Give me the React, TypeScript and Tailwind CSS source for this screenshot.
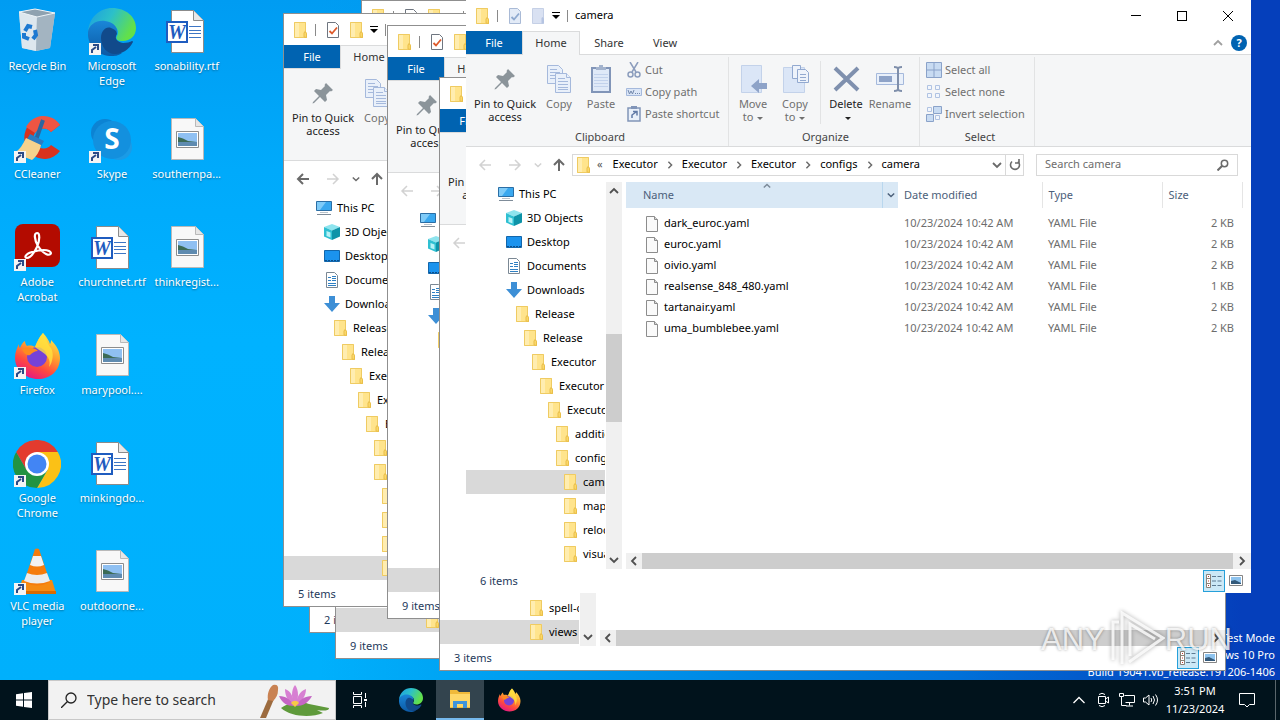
import type { ReactNode } from 'react';
import { clsx } from 'clsx';

/* ---------- small icons ---------- */

function FolderIcon() {
  return (
    <svg className="h-4 w-4 shrink-0" viewBox="0 0 16 16">
      <path d="M2 0h12v10l.5 1v5H2z" fill="#ffe48c" />
      <path d="M2.500.5h11v9.500l1 1.500v4h-12z" fill="none" stroke="#efcb62" />
      <path d="M3 1h4v14H3z" fill="#ffedb0" />
      <path d="M12 15v-4l1-1.500 1.500 2v4z" fill="#fbd768" stroke="#e9bf4a" />
    </svg>
  );
}

function CheckDocIcon({ muted }: { muted?: boolean }) {
  return (
    <svg className="h-4 w-4 shrink-0" viewBox="0 0 16 16">
      <path
        d="M2.500.5h8l3 3v12h-11z"
        fill={muted ? '#e3ebf7' : '#fff'}
        stroke={muted ? '#a9bad6' : '#6f7680'}
      />
      <path d="M4.500 9l2.500 2.500 5-6" fill="none" stroke={muted ? '#8ea9cf' : '#dd5a2b'} strokeWidth="1.800" />
    </svg>
  );
}

function NewFolderIcon({ muted }: { muted?: boolean }) {
  if (!muted) return <FolderIcon />;
  return (
    <svg className="h-4 w-4 shrink-0" viewBox="0 0 16 16">
      <path d="M2.500.5h11v15h-11z" fill="#d9e1f2" stroke="#c5d0e6" />
      <path d="M11.500 10l1-1 1.500 1.500v5h-2.500z" fill="#b5c4e2" />
    </svg>
  );
}

function ComputerIcon() {
  return (
    <svg className="h-4 w-4 shrink-0" viewBox="0 0 16 16">
      <path d="M.5 1.500h15v9H.5z" fill="#3aa8ef" stroke="#2b6ea5" />
      <path d="M1 2h9L4 10H1z" fill="#7fcbf8" />
      <path d="M1 14.500h14" stroke="#7f8c99" />
      <path d="M4 12.500h8" stroke="#b9c2ca" />
    </svg>
  );
}

function CubeIcon() {
  return (
    <svg className="h-4 w-4 shrink-0" viewBox="0 0 16 16">
      <path d="M8 0l8 3-8 3.500L0 3z" fill="#8ee4ee" />
      <path d="M0 3l8 3.500V16l-8-3.500z" fill="#2fc0d2" />
      <path d="M16 3L8 6.500V16l8-3.500z" fill="#0e93a8" />
      <path d="M2.500 7l4 1.500v5l-4-1.500z" fill="#b8f2f6" />
    </svg>
  );
}

function DesktopIcon() {
  return (
    <svg className="h-4 w-4 shrink-0" viewBox="0 0 16 16">
      <path d="M.5 2.500h15v11H.5z" fill="#1b93ee" stroke="#1266ab" />
      <path d="M1 12.500h14" stroke="#0b4f8c" strokeDasharray="2 1" />
    </svg>
  );
}

function DocumentsIcon() {
  return (
    <svg className="h-4 w-4 shrink-0" viewBox="0 0 16 16">
      <path d="M2.500.5h8l3 3v12h-11z" fill="#fff" stroke="#7b8894" />
      <path d="M4 5.500h3M4 8.500h3M4 11.500h8M4 13.500h8M8 4.500h4M8 6.500h4M8 8.500h4" stroke="#2f80c3" />
    </svg>
  );
}

function DownloadsIcon() {
  return (
    <svg className="h-4 w-4 shrink-0" viewBox="0 0 16 16">
      <path d="M5 0h6v7h5l-8 9-8-9h5z" fill="#3d8fd6" />
    </svg>
  );
}

function FileIcon() {
  return (
    <svg className="h-4 w-4 shrink-0" viewBox="0 0 16 16">
      <path d="M2.500.5h8l3 3v12h-11z" fill="#fafafa" stroke="#8c8c8c" />
      <path d="M10.500.5v3h3" fill="#d8d8d8" stroke="#8c8c8c" />
    </svg>
  );
}

function PinIcon() {
  return (
    <svg className="h-7 w-7" viewBox="0 0 28 28">
      <path
        d="M17 4l7 7-2 1.500-1-.5-4 4 1 5-2 2-5-5-6 6-1.500.5L4 23l6-6-5-5 2-2 5 1 4-4-.5-1z"
        fill="#8b949a"
      />
    </svg>
  );
}

function CopyIcon() {
  return (
    <svg className="h-7 w-7" viewBox="0 0 28 28">
      <g fill="#e9f0fa" stroke="#a5b9dc">
        <path d="M2.500.5h11l4 4v14h-15z" />
        <path d="M5 4.500h7M5 7.500h10M5 10.500h10M5 13.500h10" />
        <path d="M10.500 8.500h11l4 4v15h-15z" />
        <path d="M21.500 8.500v4h4M13 13.500h7M13 16.500h10M13 19.500h10M13 22.500h10M13 24.500h10" />
      </g>
    </svg>
  );
}

function PasteIcon() {
  return (
    <svg className="h-7 w-7" viewBox="0 0 28 28">
      <path d="M5 3h18v24H5z" fill="#dfe9f8" stroke="#8195b8" strokeWidth="2" />
      <path d="M9 5V2h3V0h4v2h3v3z" fill="#a3b3cd" />
      <path d="M7 9.500h14M7 12.500h14M7 15.500h14M7 18.500h14M7 21.500h14" stroke="#c2d2ec" />
    </svg>
  );
}

function MoveToIcon() {
  return (
    <svg className="h-7 w-7" viewBox="0 0 28 28">
      <path d="M2.500.5h20v27h-20z" fill="#dbe6f7" stroke="#c3d2ea" />
      <path d="M12 21l8-7v4h8v6h-8v4z" fill="#8ea3c8" />
    </svg>
  );
}

function CopyToIcon() {
  return (
    <svg className="h-7 w-7" viewBox="0 0 28 28">
      <path d="M2.500 2.500h21v25h-21z" fill="#dbe6f7" stroke="#c3d2ea" />
      <g fill="#eef3fb" stroke="#92a9d0">
        <path d="M11.500.5h8v13h-8z" />
        <path d="M16.500 4.500h8l3 3v10h-11z" />
        <path d="M19 9.500h6M19 12.500h6M19 15.500h6" />
      </g>
    </svg>
  );
}

function DeleteIcon() {
  return (
    <svg className="h-7 w-7" viewBox="0 0 28 28">
      <path d="M3 3l23 22M26 3L3 25" stroke="#7f90ae" strokeWidth="4" />
    </svg>
  );
}

function RenameIcon() {
  return (
    <svg className="h-7 w-7" viewBox="0 0 28 28">
      <path d="M.5 8.500h27v11H.5z" fill="#e9f0fa" stroke="#a5b9dc" />
      <path d="M3 11h13v6H3z" fill="#8ea3c8" />
      <path d="M18 2q4 0 4 2v20q0 2-4 2M26 2q-4 0-4 2v20q0 2 4 2" fill="none" stroke="#7f8fab" strokeWidth="2" />
    </svg>
  );
}

function CutIcon() {
  return (
    <svg className="h-4 w-4" viewBox="0 0 16 16" fill="none" stroke="#8c9dbd">
      <path d="M4 0l6 10M12 0L6 10" strokeWidth="1.500" />
      <circle cx="4.500" cy="12.500" r="2.500" strokeWidth="1.500" />
      <circle cx="11.500" cy="12.500" r="2.500" strokeWidth="1.500" />
    </svg>
  );
}

function CopyPathIcon() {
  return (
    <svg className="h-4 w-4" viewBox="0 0 16 16">
      <path d="M.5 4.500h15v7H.5z" fill="#dbe6f7" stroke="#a5b9dc" />
      <path d="M2 6l1.500 4L5 7l1.500 3L8 6M9 9.500h1M11 9.500h1M13 9.500h1" fill="none" stroke="#7288ac" />
    </svg>
  );
}

function PasteShortcutIcon() {
  return (
    <svg className="h-4 w-4" viewBox="0 0 16 16">
      <path d="M2 2h12v13H2z" fill="#e9f0fa" stroke="#8195b8" strokeWidth="1.500" />
      <path d="M5 0h6v3H5z" fill="#8195b8" />
      <path d="M6 12V9l4-3M7 5.500h4v4" fill="none" stroke="#6079a6" strokeWidth="1.500" />
    </svg>
  );
}

function SelectIcon({ kind }: { kind: 'all' | 'none' | 'invert' }) {
  if (kind === 'all') {
    return (
      <svg className="h-4 w-4" viewBox="0 0 16 16">
        <path d="M.5.5h15v15H.5zM8 0v16M0 8h16" fill="#c8dbf2" stroke="#8aa2c9" />
      </svg>
    );
  }
  if (kind === 'none') {
    return (
      <svg className="h-4 w-4" viewBox="0 0 16 16">
        <path d="M1.500 1.500h4v4h-4zM9.500 1.500h4v4h-4zM1.500 9.500h4v4h-4zM9.500 9.500h4v4h-4z" fill="#f2f6fc" stroke="#b0c3e2" />
      </svg>
    );
  }
  return (
    <svg className="h-4 w-4" viewBox="0 0 16 16">
      <path d="M1.500 1.500h4v4h-4zM9.500 9.500h4v4h-4z" fill="#f2f6fc" stroke="#b0c3e2" />
      <path d="M7.500.5h8v7h-8zM.5 8.500h7v7h-7z" fill="#c8dbf2" stroke="#8aa2c9" />
    </svg>
  );
}

function Chevron({ dir, className }: { dir: 'up' | 'down' | 'left' | 'right'; className?: string }) {
  const paths = {
    up: 'M1 7l4-4 4 4',
    down: 'M1 3l4 4 4-4',
    left: 'M7 1L3 5l4 4',
    right: 'M3 1l4 4-4 4',
  };
  return (
    <svg className={clsx('shrink-0', className ?? 'h-2.5 w-2.5')} viewBox="0 0 10 10">
      <path d={paths[dir]} fill="none" stroke="currentColor" strokeWidth="1.800" />
    </svg>
  );
}

function Arrow({ dir, muted }: { dir: 'left' | 'right' | 'up'; muted?: boolean }) {
  const paths = {
    left: 'M13 7H2M7 2L2 7l5 5',
    right: 'M1 7h11M7 2l5 5-5 5',
    up: 'M7 13V2M2 7l5-5 5 5',
  };
  return (
    <svg className="h-3.5 w-3.5" viewBox="0 0 14 14">
      <path d={paths[dir]} fill="none" stroke={muted ? '#d2d2d2' : '#6a6a6a'} strokeWidth={muted ? 1.5 : 2} />
    </svg>
  );
}

function DetailsViewIcon() {
  return (
    <svg className="h-4 w-4" viewBox="0 0 16 16">
      <path d="M.5 1.500h4v13h-4zM.5 5.500h4M.5 10.500h4" fill="#fff" stroke="#8a8178" />
      <path d="M2 3.500h1M2 8h1M2 12.500h1" stroke="#c0392b" />
      <path d="M6 3.500h4M11.500 3.500h4M6 8h4M11.500 8h4M6 12.500h4M11.500 12.500h4" stroke="#5c7a92" />
    </svg>
  );
}

function ThumbViewIcon() {
  return (
    <svg className="h-4 w-4" viewBox="0 0 16 16">
      <path d="M1.500 2.500h13v10h-13z" fill="#fff" stroke="#858585" />
      <path d="M3 4h10v7H3z" fill="#8ec3ee" />
      <path d="M3 8l4-1 6 3v1H3z" fill="#33597a" />
    </svg>
  );
}

/* ---------- desktop icons ---------- */

function EdgeLogo({ className }: { className: string }) {
  return (
    <svg className={className} viewBox="0 0 48 48">
      <defs>
        <linearGradient id="edge-top" x1="0" y1="0" x2="1" y2="0.400">
          <stop offset="0" stopColor="#1b9de2" />
          <stop offset="0.500" stopColor="#2cc0c9" />
          <stop offset="1" stopColor="#62e04a" />
        </linearGradient>
        <linearGradient id="edge-left" x1="0" y1="0" x2="0" y2="1">
          <stop offset="0" stopColor="#1a86d8" />
          <stop offset="1" stopColor="#0c59a4" />
        </linearGradient>
      </defs>
      <path d="M0 24C1 9 12 0 24 0c14 0 24 9 24 20 0 8-6 13-13 13-6 0-8-2-6-5 3-5-1-12-9-12C10 14 2 18 0 24z" fill="url(#edge-top)" />
      <path d="M0 24c1-7 8-12 17-11 8 1 13 6 12 12-4-5-12-3-12 5 0 10 9 16 17 15-4 3-8 3-10 3C10 48-1 38 0 24z" fill="url(#edge-left)" />
      <path d="M13 30c0-7 5-12 10-10 3 1 6 3 6 6-3 4 0 8 6 9 4 0 7-1 9-2 1 0 1 1 1 1-4 8-11 12-18 12-8 0-14-7-14-16z" fill="#114a8b" />
    </svg>
  );
}

function FirefoxLogo({ className }: { className: string }) {
  return (
    <svg className={className} viewBox="0 0 48 48">
      <defs>
        <linearGradient id="fx-body" x1="0.800" y1="0" x2="0.300" y2="1">
          <stop offset="0" stopColor="#fff14f" />
          <stop offset="0.400" stopColor="#ffa02e" />
          <stop offset="0.700" stopColor="#ff4b3e" />
          <stop offset="1" stopColor="#e31587" />
        </linearGradient>
      </defs>
      <path d="M30 1c4 4 6 8 7 11 1-1 1-3 1-4 5 5 9 11 9 18 0 13-10 21-22 21S2 38 2 26c0-6 2-10 4-14 0 2 0 3 1 4 1-3 3-6 5-7 0 2 1 4 2 5 3-1 7 0 8 1 2-5 4-10 8-14z" fill="url(#fx-body)" />
      <circle cx="24" cy="25" r="10" fill="#7642d8" />
      <path d="M9 17c6-3 13-1 16 2-3 0-6 2-8 4-3 1-6-1-8-6z" fill="#ff8a1e" />
      <path d="M30 1c4 6 4 11 8 15 3 5 2 14-2 19 4-12-10-16-14-20 2-5 4-10 8-14z" fill="#ffe23f" opacity="0.800" />
    </svg>
  );
}

function RecycleBin() {
  return (
    <svg className="h-12 w-12" viewBox="0 0 48 48">
      <path d="M6 4l16-3 20 4-5 35-14 3-14-3z" fill="#c4d3de" />
      <path d="M6 4l18 4-1 35-14-3z" fill="#dde7ee" />
      <path d="M24 8l18-3-5 35-14 3z" fill="#a3b4c1" />
      <path d="M6 4l16-3 20 4-18 4z" fill="#8fa2b0" stroke="#eef4f8" />
      <g fill="none" stroke="#1d79d1" strokeWidth="4">
        <path d="M12 23l3-5 4 1M22 22l1 5-3 4M16 31l-5-2v-4" />
      </g>
    </svg>
  );
}

function CCleanerLogo() {
  return (
    <svg className="h-12 w-12" viewBox="0 0 48 48">
      <path d="M47 9a20 21 0 1 0 0 26l-9-6a10 10 0 1 1 0-13z" fill="#d8321f" />
      <path d="M47 9a20 21 0 0 0-34 2l9 6a10 10 0 0 1 16-1z" fill="#ee5543" />
      <path d="M30 4l-7 20" stroke="#2c66a0" strokeWidth="4" />
      <path d="M17 18l14 7-4 7-14-7z" fill="#2d7cc2" />
      <path d="M13 22l15 7c-1 6-5 12-9 15L1 37c6-3 9-9 12-15z" fill="#f6d28d" />
    </svg>
  );
}

function SkypeLogo() {
  return (
    <svg className="h-12 w-12" viewBox="0 0 48 48">
      <circle cx="17" cy="17" r="14" fill="#0c83d3" />
      <circle cx="31" cy="31" r="13" fill="#1b9be6" />
      <circle cx="24" cy="24" r="19" fill="#1390de" />
      <text x="24" y="33" textAnchor="middle" fontSize="28" fontWeight="700" fontFamily="Open Sans, sans-serif" fill="#fff">
        S
      </text>
    </svg>
  );
}

function AcrobatLogo() {
  return (
    <svg className="h-12 w-12" viewBox="0 0 48 48">
      <rect x="2" y="0" width="45" height="43" rx="8" fill="#b30b00" />
      <path
        d="M25 22C21 15 21 9 24 9s3 7 0 14c-3 6-7 11-10 11s-2-4 5-6c7-2 13-3 17-1s1 5-3 3-6-5-8-8z"
        fill="none"
        stroke="#fff"
        strokeWidth="2.200"
      />
    </svg>
  );
}

function ChromeLogo() {
  return (
    <svg className="h-12 w-12" viewBox="0 0 48 48">
      <path d="M24 12h20.800A24 24 0 0 1 24 48l10.400-18z" fill="#fbc116" />
      <path d="M3.200 12A24 24 0 0 0 24 48l10.400-18L24 24 13.600 30z" fill="#229342" />
      <path d="M3.200 12A24 24 0 0 1 44.800 12H24v12L13.600 30z" fill="#e33b2e" />
      <circle cx="24" cy="24" r="12" fill="#fff" />
      <circle cx="24" cy="24" r="9.500" fill="#4285f4" />
    </svg>
  );
}

function VlcLogo() {
  return (
    <svg className="h-12 w-12" viewBox="0 0 48 48">
      <path d="M9 32h30l4 13H5z" fill="#f58a12" />
      <path d="M5 43h38v3H5z" fill="#d86a00" />
      <path d="M22 1q2-1 4 0l11 33q-13 7-26 0z" fill="#f57c0c" />
      <path d="M20 8h8l3 9q-7 3-14 0z" fill="#f2f2f2" />
      <path d="M14 25q10 4 20 0l3 8q-13 5-26 0z" fill="#ececec" />
    </svg>
  );
}

function RtfIcon() {
  return (
    <svg className="h-12 w-12" viewBox="0 0 48 48">
      <path d="M8.500 2.500h22l10 10v32h-32z" fill="#fff" stroke="#8b8b8b" />
      <path d="M30.500 2.500v10h10" fill="#e8e8e8" stroke="#8b8b8b" />
      <path d="M26 18.500h12M26 22.500h12M26 25.500h12M26 29.500h12" stroke="#3d76c4" />
      <path d="M4 14h20v20H4z" fill="#fff" stroke="#1f5cbf" strokeWidth="2" />
      <text x="14" y="31" textAnchor="middle" fontSize="20" fontStyle="italic" fontWeight="700" fontFamily="Liberation Serif, serif" fill="#1f5cbf">
        W
      </text>
    </svg>
  );
}

function ImageFileIcon() {
  return (
    <svg className="h-12 w-12" viewBox="0 0 48 48">
      <path d="M8.500 2.500h24l8 8v33h-32z" fill="#f8f8f8" stroke="#b9b9b9" />
      <path d="M32.500 2.500v8h8" fill="#e6e6e6" stroke="#b9b9b9" />
      <path d="M13.500 15.500h22v16h-22z" fill="#fff" stroke="#8d8d8d" />
      <path d="M15 17h19v13H15z" fill="#8fc0f2" />
      <path d="M15 21q5 1 10 4l9 1v1H15z" fill="#3c6b56" />
      <path d="M15 26h19v4H15z" fill="#5f8bb0" />
    </svg>
  );
}

function DesktopItem({ label, icon, shortcut }: { label: string; icon: ReactNode; shortcut?: boolean }) {
  return (
    <button className="flex flex-col items-center pt-2">
      <span className="relative">
        {icon}
        {shortcut && (
          <svg className="absolute bottom-0 left-0 h-3.5 w-3.5" viewBox="0 0 14 14">
            <path d="M1 1h12v12H1z" fill="#f4f4f4" />
            <path d="M4 11V8l4-3M5 3h5v5" fill="none" stroke="#2b4a86" strokeWidth="2" />
          </svg>
        )}
      </span>
      <span className="mt-0.5 w-[72px] text-center leading-[15px] text-white [text-shadow:0_1px_2px_#0006]">{label}</span>
    </button>
  );
}

const desktopItems = [
  { label: 'Recycle Bin', icon: <RecycleBin /> },
  { label: 'CCleaner', icon: <CCleanerLogo />, shortcut: true },
  { label: 'Adobe Acrobat', icon: <AcrobatLogo />, shortcut: true },
  { label: 'Firefox', icon: <FirefoxLogo className="h-12 w-12" />, shortcut: true },
  { label: 'Google Chrome', icon: <ChromeLogo />, shortcut: true },
  { label: 'VLC media player', icon: <VlcLogo />, shortcut: true },
  { label: 'Microsoft Edge', icon: <EdgeLogo className="h-12 w-12" />, shortcut: true },
  { label: 'Skype', icon: <SkypeLogo />, shortcut: true },
  { label: 'churchnet.rtf', icon: <RtfIcon /> },
  { label: 'marypool....', icon: <ImageFileIcon /> },
  { label: 'minkingdo...', icon: <RtfIcon /> },
  { label: 'outdoorne...', icon: <ImageFileIcon /> },
  { label: 'sonability.rtf', icon: <RtfIcon /> },
  { label: 'southernpa...', icon: <ImageFileIcon /> },
  { label: 'thinkregist...', icon: <ImageFileIcon /> },
];

/* ---------- explorer window ---------- */

function BigButton({
  icon,
  label,
  className,
  enabled,
  menu,
}: {
  icon: ReactNode;
  label: ReactNode;
  className: string;
  enabled?: boolean;
  menu?: boolean;
}) {
  return (
    <button
      className={clsx(
        'flex shrink-0 flex-col items-center pt-2 leading-[13px]',
        enabled ? 'text-[#222222]' : 'text-[#707070]',
        className,
      )}
    >
      {icon}
      <span className="mt-1 text-center">
        {label}
        {menu && <span className="ml-1 inline-block border-x-3 border-t-3 border-x-transparent align-middle" />}
      </span>
    </button>
  );
}

function SmallButton({ icon, label }: { icon: ReactNode; label: string }) {
  return (
    <button className="flex h-[22px] items-center gap-[3px] whitespace-nowrap text-[#707070]">
      {icon}
      {label}
    </button>
  );
}

function RibbonGroup({ title, className, children }: { title: string; className: string; children: ReactNode }) {
  return (
    <div className={clsx('mt-0.5 flex shrink-0 flex-col border-r border-[#e2e3e4]', className)}>
      <div className="flex flex-1">{children}</div>
      <div className="text-center leading-[18px] text-[#444444]">{title}</div>
    </div>
  );
}

function Ribbon({ full }: { full?: boolean }) {
  return (
    <div className="flex h-[93px] shrink-0 border-y border-[#dadbdc] bg-[#f5f6f7]">
      <RibbonGroup title="Clipboard" className="w-[263px] pl-1.5">
        <BigButton icon={<PinIcon />} label="Pin to Quick access" className="w-[66px]" enabled />
        <BigButton icon={<CopyIcon />} label="Copy" className="w-[42px]" />
        <BigButton icon={<PasteIcon />} label="Paste" className="w-[42px]" />
        <div className="flex flex-col pt-0.5 pl-1">
          <SmallButton icon={<CutIcon />} label="Cut" />
          <SmallButton icon={<CopyPathIcon />} label="Copy path" />
          <SmallButton icon={<PasteShortcutIcon />} label="Paste shortcut" />
        </div>
      </RibbonGroup>
      {full && (
        <>
          <RibbonGroup title="Organize" className="w-[191px] pl-[3px]">
            <BigButton icon={<MoveToIcon />} label={<>Move<br />to</>} className="w-[42px]" menu />
            <BigButton icon={<CopyToIcon />} label={<>Copy<br />to</>} className="w-[42px]" menu />
            <div className="mx-1 my-1 w-px bg-[#e2e3e4]" />
            <BigButton icon={<DeleteIcon />} label={<>Delete<br /></>} className="w-[42px]" enabled menu />
            <BigButton icon={<RenameIcon />} label="Rename" className="w-[46px]" />
          </RibbonGroup>
          <RibbonGroup title="Select" className="w-[115px] pl-1.5">
            <div className="flex flex-col pt-0.5">
              <SmallButton icon={<SelectIcon kind="all" />} label="Select all" />
              <SmallButton icon={<SelectIcon kind="none" />} label="Select none" />
              <SmallButton icon={<SelectIcon kind="invert" />} label="Invert selection" />
            </div>
          </RibbonGroup>
        </>
      )}
    </div>
  );
}

type TreeRow = { label: string; pad: string; icon?: ReactNode };

const pads = [
  'pl-[32px]',
  'pl-[40px]',
  'pl-[48px]',
  'pl-[56px]',
  'pl-[64px]',
  'pl-[72px]',
  'pl-[80px]',
  'pl-[88px]',
  'pl-[96px]',
];

const rootRows: TreeRow[] = [
  { label: 'This PC', pad: pads[0], icon: <ComputerIcon /> },
  { label: '3D Objects', pad: pads[1], icon: <CubeIcon /> },
  { label: 'Desktop', pad: pads[1], icon: <DesktopIcon /> },
  { label: 'Documents', pad: pads[1], icon: <DocumentsIcon /> },
  { label: 'Downloads', pad: pads[1], icon: <DownloadsIcon /> },
  { label: 'Release', pad: pads[2] },
  { label: 'Release', pad: pads[3] },
  { label: 'Executor', pad: pads[4] },
  { label: 'Executor', pad: pads[5] },
  { label: 'Executor', pad: pads[6] },
];

const configTree: TreeRow[] = [
  ...rootRows,
  { label: 'additional', pad: pads[7] },
  { label: 'configs', pad: pads[7] },
  { label: 'camera', pad: pads[8] },
  { label: 'maps', pad: pads[8] },
  { label: 'relocation', pad: pads[8] },
  { label: 'visual', pad: pads[8] },
];

const resourceTree: TreeRow[] = [
  ...rootRows,
  { label: 'additional', pad: pads[7] },
  { label: 'configs', pad: pads[7] },
  { label: 'data', pad: pads[7] },
  { label: 'resources', pad: pads[7] },
  { label: 'spell-check', pad: pads[7] },
  { label: 'views', pad: pads[7] },
];

const files = [
  { name: 'dark_euroc.yaml', size: '2 KB' },
  { name: 'euroc.yaml', size: '2 KB' },
  { name: 'oivio.yaml', size: '2 KB' },
  { name: 'realsense_848_480.yaml', size: '1 KB' },
  { name: 'tartanair.yaml', size: '2 KB' },
  { name: 'uma_bumblebee.yaml', size: '2 KB' },
];

function FileTable() {
  return (
    <table className="w-full table-fixed border-collapse text-left">
      <thead>
        <tr className="h-[26px] text-[#4c607a]">
          <th className="relative w-[272px] bg-[#d9e8f5] pl-[17px] font-normal">
            Name
            <Chevron dir="up" className="absolute top-0 left-[137px] h-2 w-2 text-[#7c8a98]" />
            <span className="absolute inset-y-0 right-0 flex w-4 items-center justify-center border-l border-[#b9d7ee]">
              <Chevron dir="down" className="h-2 w-2" />
            </span>
          </th>
          <th className="w-[144px] border-r border-[#e5e5e5] pl-1.5 font-normal">Date modified</th>
          <th className="w-[120px] border-r border-[#e5e5e5] pl-1.5 font-normal">Type</th>
          <th className="w-[80px] border-r border-[#e5e5e5] pl-1.5 font-normal">Size</th>
          <th />
        </tr>
      </thead>
      <tbody className="text-[#6d6d6d] before:block before:h-[5px]">
        {files.map((file) => (
          <tr key={file.name} className="h-[21px]">
            <td className="pl-[18px] text-black">
              <span className="flex items-center gap-1">
                <FileIcon />
                {file.name}
              </span>
            </td>
            <td className="pl-1.5">10/23/2024 10:42 AM</td>
            <td className="pl-1.5">YAML File</td>
            <td className="pr-2 text-right">{file.size}</td>
            <td />
          </tr>
        ))}
      </tbody>
    </table>
  );
}

function ExplorerWindow({
  title,
  className,
  crumbs = [],
  tree = configTree,
  selected = 15,
  count,
  active,
  canGoBack,
}: {
  title: string;
  className: string;
  crumbs?: string[];
  tree?: TreeRow[];
  selected?: number;
  count: number;
  active?: boolean;
  canGoBack?: boolean;
}) {
  return (
    <section
      aria-label={title}
      className={clsx(
        'absolute isolate flex w-[785px] flex-col overflow-hidden bg-white',
        active ? 'h-[593px]' : 'h-[592px] outline outline-[#8f8f8f]',
        className,
      )}
    >
      <header className="flex h-[31px] shrink-0 items-center">
        <div className="flex items-center pl-2 text-black">
          <FolderIcon />
          <span className="mx-[7px] h-3 w-px bg-[#8a8a8a]" />
          <span className="mr-[7px] ml-0.5"><CheckDocIcon muted={active} /></span>
          <NewFolderIcon muted={active} />
          <svg className="ml-1.5 h-2 w-2" viewBox="0 0 8 8">
            <path d="M0 .5h8" stroke="#000" />
            <path d="M0 3h8L4 7z" />
          </svg>
          <span className="mx-[7px] h-3 w-px bg-[#8a8a8a]" />
          {title}
        </div>
        <div className="ml-auto flex">
          <button aria-label="Minimize" className="flex h-[30px] w-[46px] items-center justify-center">
            <span className="h-px w-2.5 bg-black" />
          </button>
          <button aria-label="Maximize" className="flex h-[30px] w-[46px] items-center justify-center">
            <span className="h-2.5 w-2.5 border border-black" />
          </button>
          <button aria-label="Close" className="flex h-[30px] w-[46px] items-center justify-center">
            <svg className="h-2.5 w-2.5" viewBox="0 0 10 10">
              <path d="M0 0l10 10M10 0L0 10" stroke="#000" />
            </svg>
          </button>
        </div>
      </header>

      <div className="-mb-px flex h-6 shrink-0 items-center text-[#333333]">
        <button className="h-full w-14 bg-[#0063b1] text-white">File</button>
        <button className="z-10 h-full w-[58px] border border-b-0 border-[#dadbdc] bg-[#f5f6f7]">Home</button>
        <button className="w-[58px]">Share</button>
        <button className="w-[54px]">View</button>
        <Chevron dir="up" className="mr-2 ml-auto h-2.5 w-2.5 text-[#a0a0a0]" />
        <button
          aria-label="Help"
          className="mr-1 flex h-4 w-4 items-center justify-center rounded-full bg-[#0063b1] font-bold text-white"
        >
          ?
        </button>
      </div>

      <Ribbon full={active} />

      <div className="flex h-[35px] shrink-0 items-center pr-[13px] pl-3">
        <button aria-label="Back"><Arrow dir="left" muted={!canGoBack} /></button>
        <button aria-label="Forward" className="ml-4"><Arrow dir="right" muted /></button>
        <Chevron dir="down" className={clsx('ml-3 h-2 w-2', canGoBack ? 'text-[#6a6a6a]' : 'text-[#d2d2d2]')} />
        <button aria-label="Up" className="ml-2.5"><Arrow dir="up" /></button>
        <nav className="ml-1.5 flex h-[22px] flex-1 items-center border border-[#d9d9d9] pl-0.5">
          <FolderIcon />
          <span className="mr-2.5 ml-1.5 text-[#555555]">«</span>
          {crumbs.map((crumb, i) => (
            <span key={i} className="flex items-center">
              {i > 0 && <Chevron dir="right" className="mx-2 h-2 w-2 text-[#6a6a6a]" />}
              <button className="text-black">{crumb}</button>
            </span>
          ))}
          <Chevron dir="down" className="mr-[3px] ml-auto h-2.5 w-2.5 text-[#6a6a6a]" />
          <button aria-label="Refresh" className="flex h-full w-[18px] items-center justify-center border-l border-[#d9d9d9]">
            <svg className="h-3 w-3" viewBox="0 0 12 12">
              <path d="M9 2.500a4.500 4.500 0 1 1-6 0M10 0v4H6" fill="none" stroke="#6a6a6a" strokeWidth="1.600" />
            </svg>
          </button>
        </nav>
        <label className="ml-3 flex h-[22px] w-[202px] items-center border border-[#d9d9d9] px-2">
          <input
            aria-label={`Search ${title}`}
            placeholder={active ? `Search ${title}` : undefined}
            className="min-w-0 flex-1 bg-transparent outline-none placeholder:text-[#6d6d6d]"
          />
          <svg className="h-3 w-3" viewBox="0 0 12 12" fill="none" stroke="#6a6a6a">
            <circle cx="7.500" cy="4.500" r="3.200" strokeWidth="1.500" />
            <path d="M5 7l-4.500 4.500" strokeWidth="2" />
          </svg>
        </label>
      </div>

      <div className="flex min-h-0 flex-1">
        <ul className="mr-px w-[139px] shrink-0 overflow-hidden text-black">
          {tree.map((row, i) => (
            <li
              key={i}
              className={clsx('flex h-6 items-center gap-[5px] whitespace-nowrap', row.pad, i === selected && 'bg-[#d9d9d9]')}
            >
              {row.icon ?? <FolderIcon />}
              {row.label}
            </li>
          ))}
        </ul>
        <div className="flex w-4 shrink-0 flex-col items-center bg-[#f0f0f0] text-[#505050]">
          <Chevron dir="up" className="my-1 h-2.5 w-2.5" />
          <div className="mt-[134px] h-[88px] w-full bg-[#cdcdcd]" />
          <Chevron dir="down" className="mt-auto mb-1 h-2.5 w-2.5" />
        </div>
        <div className="ml-1 flex min-w-0 flex-1 flex-col">
          {active && <FileTable />}
          <div className="mt-auto flex h-4 items-center bg-[#f0f0f0] text-[#505050]">
            <Chevron dir="left" className="mx-[3px] h-2.5 w-2.5" />
            <div className="h-full flex-1 bg-[#cdcdcd]" />
            <Chevron dir="right" className="mx-1 h-2.5 w-2.5" />
          </div>
        </div>
      </div>

      <footer className="flex h-6 shrink-0 items-center pr-1 pl-3.5 text-[#1e395b]">
        {count} items
        <button
          aria-label="Details view"
          className="ml-auto flex h-[22px] w-[22px] items-center justify-center border border-[#26a0da] bg-[#cbe8f6]"
        >
          <DetailsViewIcon />
        </button>
        <button aria-label="Thumbnail view" className="flex h-[22px] w-[22px] items-center justify-center">
          <ThumbViewIcon />
        </button>
      </footer>
    </section>
  );
}

/* ---------- taskbar ---------- */

function Taskbar() {
  return (
    <footer className="flex h-10 shrink-0 items-center bg-[#01131c] text-white">
      <button aria-label="Start" className="flex h-full w-12 items-center justify-center">
        <svg className="h-4 w-4" viewBox="0 0 16 16" fill="#fff">
          <path d="M0 2.200l7-1v6.300H0zM8 1l8-1v7.500H8zM0 8.500h7v6.300l-7-1zM8 8.500h8V16l-8-1z" />
        </svg>
      </button>
      <label className="flex h-full w-72 items-center border border-[#c8c8c8] bg-[#f2f2f2] pl-3">
        <svg className="h-4 w-4" viewBox="0 0 16 16" fill="none" stroke="#222">
          <circle cx="10" cy="6" r="5" strokeWidth="1.300" />
          <path d="M6.500 9.500L0 16" strokeWidth="1.300" />
        </svg>
        <input
          aria-label="Type here to search"
          placeholder="Type here to search"
          className="ml-2.5 min-w-0 flex-1 bg-transparent text-sm outline-none placeholder:text-[#333333]"
        />
        <svg className="h-9 w-20" viewBox="0 0 80 36">
          <path d="M5 36l9-21 5 2-8 19z" fill="#9c6b3f" />
          <path d="M13 18c-1-6 1-12 5-15q6-1 5 5c0 5-2 8-5 11z" fill="#c98252" />
          <path d="M26 26c8-6 20-8 28-4l20 4c0 3-6 3-12 2l6 3c-12 5-32 4-42-5z" fill="#5f9a3b" />
          <g fill="#d77fd2">
            <path d="M40 3c4 5 4 14 0 20-4-6-4-15 0-20z" />
            <path d="M30 7c6 2 9 9 9 16-6-3-9-9-9-16zM51 7c-6 2-10 9-10 16 6-3 10-9 10-16z" />
            <path d="M24 14c7 0 12 4 15 10-7 0-12-3-15-10zM57 14c-7 0-13 4-16 10 7 0 12-3 16-10z" fill="#c566c4" />
          </g>
          <path d="M36 21c2-3 6-3 8 0l-4 4z" fill="#f7c948" />
        </svg>
      </label>
      <button aria-label="Task view" className="flex h-full w-12 items-center justify-center">
        <svg className="h-4 w-4" viewBox="0 0 16 16" fill="none" stroke="#fff">
          <path d="M1.500 4.500h8v7h-8zM1.500 0v2.500h8V0M1.500 16v-2.500h8V16M13.500 1v5M13.500 10v5" />
          <path d="M12 7h3v2h-3z" fill="#fff" stroke="none" />
        </svg>
      </button>
      <button aria-label="Edge" className="ml-[3px] flex h-full w-12 items-center justify-center">
        <EdgeLogo className="h-6 w-6" />
      </button>
      <button aria-label="File Explorer" className="mx-px flex h-full w-12 items-center justify-center border-b-2 border-[#76b9ed] bg-[#33444e]">
        <svg className="h-6 w-6" viewBox="0 0 24 24">
          <path d="M2 3h7l2 2h11v16H2z" fill="#f0b93a" />
          <path d="M2 7h20v13H2z" fill="#ffd768" />
          <path d="M5 21v-7h14v7h-4v-4H9v4z" fill="#3f94dc" />
        </svg>
      </button>
      <button aria-label="Firefox" className="flex h-full w-12 items-center justify-center">
        <FirefoxLogo className="h-6 w-6" />
      </button>

      <div className="ml-auto flex h-full items-center">
        <svg className="h-3 w-3" viewBox="0 0 12 12" fill="none" stroke="#fff">
          <path d="M.5 9L6 3.500 11.500 9" strokeWidth="1.300" />
        </svg>
        <svg className="ml-2.5 h-4 w-4" viewBox="0 0 16 16" fill="none" stroke="#fff">
          <path d="M3.500 4.500h7v7h-7zM10.500 7l3-2v6l-3-2M4 2.500Q7 0 10 2.500M4 13.500q3 2.500 6 0" />
        </svg>
        <svg className="ml-2 h-4 w-4" viewBox="0 0 16 16" fill="none" stroke="#fff">
          <path d="M5.500 3.500h10v7h-9M.5 1.500h4v3h-4zM2.500 4.500v9h5M10.500 10.500v3M7 14h7" />
        </svg>
        <svg className="ml-2 h-4 w-4" viewBox="0 0 16 16" fill="none" stroke="#fff">
          <path d="M.5 6v4h2l3.500 3V3L2.500 6zM8 6q1.500 2 0 4M10 4q3 4 0 8M12.500 2.500q4 5.500 0 11" />
        </svg>
        <div className="w-[72px] text-center leading-[18px] whitespace-nowrap">
          3:51 PM
          <br />
          11/23/2024
        </div>
        <button aria-label="Notifications" className="ml-2 h-4 w-4">
          <svg className="h-4 w-4" viewBox="0 0 16 16" fill="none" stroke="#fff">
            <path d="M.5 1.500h15v11h-5l-2.500 2.500-2.500-2.500h-5z" />
          </svg>
        </button>
        <div className="ml-5 h-full w-[5px] border-l border-[#5a666c]" />
      </div>
    </footer>
  );
}

function Watermark() {
  return (
    <div className="pointer-events-none absolute right-12 bottom-2.5 flex items-center font-['Liberation_Sans',sans-serif] text-[31px] text-white/80 [text-shadow:0_0_3px_#0006]">
      ANY
      <svg className="ml-1 h-[60px] w-14 drop-shadow-[0_0_2px_#0006]" viewBox="0 0 56 60" fill="none" stroke="#fffc" strokeWidth="3">
        <path d="M4 50V12h6M13 54V3l41 25-34 24" />
        <path d="M21 46V14l25 15" />
      </svg>
      RUN
    </div>
  );
}

export default function App() {
  return (
    <div className="flex h-screen flex-col overflow-hidden font-['Noto_Sans',sans-serif] text-[11px]">
      <main className="relative min-h-0 flex-1 bg-[linear-gradient(to_right,transparent_25%,#0098ec_45%,#0070d8_75%,#053fbb_97%),linear-gradient(to_bottom,#009cf2,#00aafb_25%,#00b2ff_50%,#00b0fc)]">
        <div className="grid w-[224px] grid-flow-col grid-cols-3 grid-rows-[repeat(6,108px)]">
          {desktopItems.map((item) => (
            <DesktopItem key={item.label} {...item} />
          ))}
        </div>

        <div className="absolute right-[5px] bottom-0 text-right leading-[17px] text-white">
          Test Mode
          <br />
          Windows 10 Pro
          <br />
          Build 19041.vb_release.191206-1406
        </div>

        <ExplorerWindow title="Executor" className="top-px left-[362px]" count={7} />
        <ExplorerWindow title="Executor" className="top-[40px] left-[310px]" count={2} />
        <ExplorerWindow title="Executor" className="top-[66px] left-[336px]" tree={resourceTree} count={9} />
        <ExplorerWindow title="configs" className="top-[14px] left-[284px]" count={5} canGoBack />
        <ExplorerWindow title="visual" className="top-[26px] left-[388px]" count={9} />
        <ExplorerWindow title="views" className="top-[78px] left-[440px]" tree={resourceTree} count={3} />
        <ExplorerWindow
          title="camera"
          className="top-0 left-[466px]"
          crumbs={['Executor', 'Executor', 'Executor', 'configs', 'camera']}
          selected={12}
          count={6}
          active
        />
        <Watermark />
      </main>
      <Taskbar />
    </div>
  );
}
